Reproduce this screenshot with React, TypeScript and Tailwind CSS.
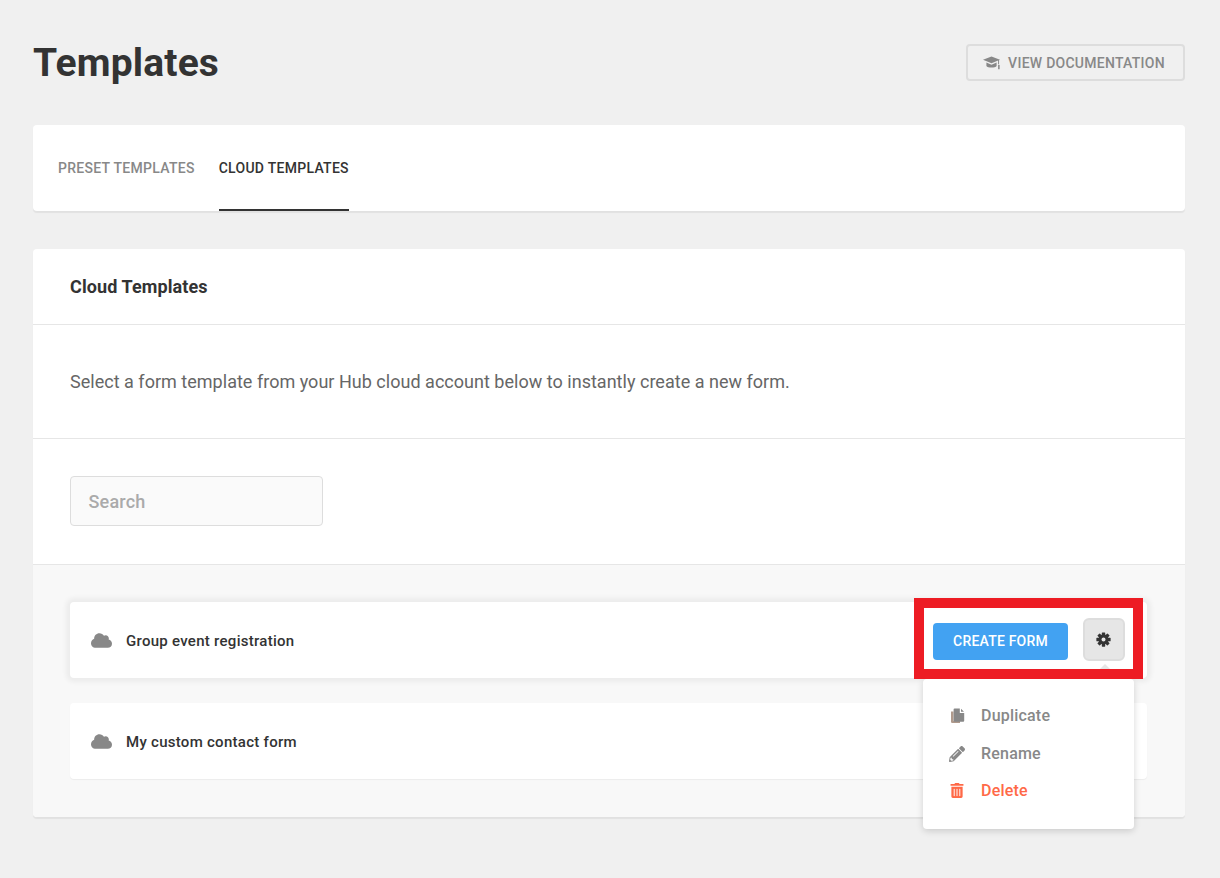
import { FaCloud, FaPencilAlt, FaTrashAlt } from "react-icons/fa";

const rows = ["Group event registration", "My custom contact form"];

function CapIcon() {
  return (
    <svg viewBox="0 0 18 14" className="w-[17px] h-[14px] mr-[8px]" fill="currentColor">
      <path d="M9 0 0 3.6l9 3.7 7-2.9v3.8h1V4L18 3.6z" />
      <path d="M3.6 6.6v3.6C4.8 12.4 13.2 12.4 14.4 10.2V6.6L9 8.8z" />
      <rect x="16" y="9" width="1.6" height="4.6" />
    </svg>
  );
}

function GearIcon() {
  return (
    <svg viewBox="0 0 16 16" className="w-[15px] h-[15px] mr-[2px] text-[#333333]" fill="currentColor">
      {[0, 45, 90, 135].map((a) => (
        <rect key={a} x="6.2" y="0.4" width="3.6" height="15.2" rx="0.6" transform={`rotate(${a} 8 8)`} />
      ))}
      <circle cx="8" cy="8" r="5.4" />
      <circle cx="8" cy="8" r="2.1" fill="#e6e6e6" />
    </svg>
  );
}

function CopyIcon() {
  return (
    <svg viewBox="0 0 15 16" className="w-[15px] h-[16px] mr-[16px]">
      <path d="M1 3.5h2.5V13H10v2H2.2A1.2 1.2 0 0 1 1 13.8z" fill="#b09a8c" />
      <path d="M4.6 0.6h5.2V5h4.4v7.8a1 1 0 0 1-1 1H4.6a1 1 0 0 1-1-1V1.6a1 1 0 0 1 1-1zM11 0.8l3 3h-3z" fill="#888888" />
    </svg>
  );
}

function Menu() {
  return (
    <div className="absolute right-[13px] top-[77px] z-10 w-[211px] h-[150px] bg-white rounded-[4px] shadow-[0_2px_7px_rgba(0,0,0,0.16)] py-[18px]">
      <div className="flex items-center h-[37px] pl-[27px] text-[#888888] font-medium text-[16px] tracking-[0.2px]">
        <CopyIcon />
        Duplicate
      </div>
      <div className="flex items-center h-[38px] pt-[2px] pl-[26px] text-[#888888] font-medium text-[16px] tracking-[0.2px]">
        <FaPencilAlt className="w-[16px] h-[16px] mr-[16px]" />
        Rename
      </div>
      <div className="flex items-center h-[37px] pl-[27px] text-[#ff6947] font-medium text-[16px] tracking-[0.2px]">
        <FaTrashAlt className="w-[14px] h-[15px] mr-[17px]" />
        Delete
      </div>
    </div>
  );
}

function Row({ name, active }: { name: string; active?: boolean }) {
  return (
    <div
      className={
        "relative flex items-center h-[76px] bg-white rounded-[4px] pl-[21px] " +
        (active ? "shadow-[0_0_5px_4px_rgba(0,0,0,0.05)] mb-[25px]" : "shadow-[0_1px_1px_rgba(0,0,0,0.05)]")
      }
    >
      <FaCloud className="w-[21px] h-[21px] text-[#888888] mr-[14px]" />
      <span className="mt-[2px] text-[15px] font-medium text-[#333333] tracking-[0.28px]">{name}</span>
      {active && (
        <>
          <div className="absolute left-[844px] top-[-4px] z-20 w-[229px] h-[81px] border-[10px] border-[#ed1c24] bg-white">
            <div className="flex items-center h-full pl-[9px]">
              <button className="mt-[6px] w-[135px] h-[37px] bg-[#42a2f2] rounded-[4px] text-white text-[14px] font-medium tracking-[0.2px]">
                CREATE FORM
              </button>
              <button className="flex items-center justify-center mt-[2px] ml-[15px] w-[42px] h-[43px] bg-[#e6e6e6] border-2 border-[#dddddd] rounded-[6px]">
                <GearIcon />
              </button>
            </div>
            <div className="absolute left-[176px] bottom-0 w-0 h-0 border-x-[5px] border-x-transparent border-b-[5px] border-b-[#e6e6e6]" />
          </div>
          <Menu />
        </>
      )}
    </div>
  );
}

export default function App() {
  return (
    <div className="min-h-[878px] bg-[#f0f0f0] pl-[33px] pr-[35px] pt-[44px] font-['Roboto',sans-serif] text-[#333333]">
      <div className="flex items-center justify-between h-[37px] mb-[44px]">
        <h1 className="mt-[2px] text-[39px] font-bold leading-none text-[#333333] tracking-[0.15px]">Templates</h1>
        <button className="flex items-center justify-center w-[219px] h-[37px] pt-px pr-[3px] border-2 border-[#dddddd] rounded-[4px] text-[#888888] text-[14px] font-medium tracking-[0.26px]">
          <CapIcon />
          VIEW DOCUMENTATION
        </button>
      </div>

      <div className="flex h-[86px] bg-white rounded-[4px] shadow-[0_2px_1px_rgba(0,0,0,0.06)] px-[25px] gap-[24px] mb-[38px]">
        <div className="pt-[33px] text-[14px] font-medium text-[#888888] tracking-[0.28px]">PRESET TEMPLATES</div>
        <div className="pt-[33px] text-[14px] font-medium text-[#333333] tracking-[0.28px] border-b-2 border-[#333333]">
          CLOUD TEMPLATES
        </div>
      </div>

      <div className="bg-white rounded-[4px] shadow-[0_2px_1px_rgba(0,0,0,0.06)]">
        <div className="flex items-center h-[76px] px-[37px] border-b border-[#e6e6e6]">
          <h2 className="text-[18px] font-bold text-[#333333] tracking-[0.1px]">Cloud Templates</h2>
        </div>
        <div className="flex items-center h-[114px] px-[37px] border-b border-[#e6e6e6]">
          <p className="text-[18px] text-[#666666] tracking-[0.02px]">
            Select a form template from your Hub cloud account below to instantly create a new form.
          </p>
        </div>
        <div className="flex items-center h-[126px] px-[37px] border-b border-[#e6e6e6]">
          <div className="flex items-center mb-px w-[253px] h-[50px] bg-[#fafafa] border border-[#dddddd] rounded-[4px] pl-[17.5px] text-[18px] font-medium text-[#aaaaaa] tracking-[0.2px]">
            Search
          </div>
        </div>
        <div className="bg-[#f8f8f8] pl-[37px] pr-[38px] pt-[37px] pb-[38px] rounded-b-[4px]">
          <Row name={rows[0]} active />
          <Row name={rows[1]} />
        </div>
      </div>
    </div>
  );
}
